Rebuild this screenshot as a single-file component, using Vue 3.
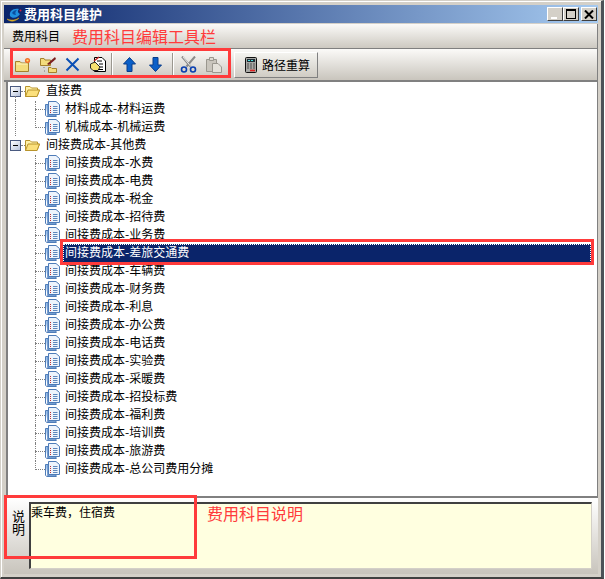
<script setup>
const names = ['水费','电费','税金','招待费','业务费','差旅交通费','车辆费','财务费','利息','办公费','电话费','实验费','采暖费','招投标费','福利费','培训费','旅游费','总公司费用分摊']
const rows = [
  { level: 0, text: '直接费' },
  { level: 1, text: '材料成本-材料运费', guide: true },
  { level: 1, text: '机械成本-机械运费', guide: true, last: true },
  { level: 0, text: '间接费成本-其他费', last: true },
  ...names.map((n, i) => ({
    level: 1,
    text: '间接费成本-' + n,
    selected: n === '差旅交通费',
    last: i === names.length - 1
  }))
]
</script>

<template>
  <div class="win">
    <div class="title">
      <svg class="logo" width="16" height="16" viewBox="0 0 16 16">
        <path d="M1 12 C4 15 9 15 13 11 C10 13 5 14 1 12Z" fill="#e8c030" stroke="#c89820" stroke-width="0.6"/>
        <path d="M4 9 C3 4 7 1 13 2 C11 4 12 6 14 7 C12 11 6 12 4 9Z" fill="#1f8fe0"/>
        <path d="M6 6 C7 4 9 3 11 3 C9 5 9 6 10 8 C8 8 7 7 6 6Z" fill="#0a4fa0"/>
        <circle cx="14.5" cy="3.5" r="1" fill="#d02040"/>
      </svg>
      <span class="title-text">费用科目维护</span>
      <div class="caps">
        <span class="cap cap-min"><i></i></span>
        <span class="cap cap-max"><i></i></span>
        <span class="cap cap-close">
          <svg width="10" height="9" viewBox="0 0 10 9"><path d="M1 0.5 L9 8.5 M9 0.5 L1 8.5" stroke="#000" stroke-width="2" fill="none"/></svg>
        </span>
      </div>
    </div>

    <div class="menu">
      <span class="menu-item">费用科目</span>
      <span class="note note-menu">费用科目编辑工具栏</span>
    </div>

    <div class="toolbar">
      <div class="tools">
        <svg class="tool" width="16" height="16" viewBox="0 0 16 16">
          <path d="M0.5 4.5 H5 L6.5 6 H13.5 V14.5 H0.5Z" fill="#f4dc7c" stroke="#a5822c"/>
          <path d="M1.5 7 H12.5" stroke="#fff6c4"/>
          <circle cx="12.5" cy="3.5" r="2.6" fill="#f0702c"/>
          <circle cx="12.5" cy="3.5" r="1.1" fill="#ffe070"/>
        </svg>
        <svg class="tool tool-b" width="17" height="17" viewBox="0 0 17 17">
          <path d="M0.5 2.5 H4 L5 4 H10.5 V9.5 H0.5Z" fill="#f4dc7c" stroke="#a5822c"/>
          <path d="M7 8 L15 1 L16 3 L9 9Z" fill="#7a1f1f"/>
          <path d="M8.5 11.5 H11 L12 12.5 H16.5 V16.5 H8.5Z" fill="#f4dc7c" stroke="#a5822c"/>
          <path d="M4 11 V13 M4 15 H6" stroke="#777" stroke-dasharray="1 1"/>
        </svg>
        <svg class="tool tool-c" width="15" height="15" viewBox="0 0 15 15">
          <path d="M1.5 1.5 L13.5 13.5 M13.5 1.5 L1.5 13.5" stroke="#0a4fb5" stroke-width="2" fill="none"/>
        </svg>
        <svg class="tool tool-d" width="16" height="17" viewBox="0 0 16 17">
          <path d="M4.5 1.5 H12 L15.5 5 V15.5 H4.5Z" fill="#fff" stroke="#000"/>
          <path d="M7 5 H12 M9 8 H13 M10 11 H13 M7 13.5 H13" stroke="#000"/>
          <path d="M0.5 8 L5 6 L10 11 L8 14.5 H3 L0.5 12Z" fill="#f6e070" stroke="#222"/>
          <path d="M4 5 L9 1" stroke="#c02020" stroke-width="1.5"/>
        </svg>
        <span class="sep sep-a"></span>
        <svg class="tool tool-up" width="13" height="15" viewBox="0 0 13 15">
          <path d="M6.5 0.5 L12.5 7 H9 V14.5 H4 V7 H0.5Z" fill="#0a5fc8" stroke="#083c8a"/>
        </svg>
        <svg class="tool tool-down" width="13" height="15" viewBox="0 0 13 15">
          <path d="M6.5 14.5 L12.5 8 H9 V0.5 H4 V8 H0.5Z" fill="#0a5fc8" stroke="#083c8a"/>
        </svg>
        <span class="sep sep-b"></span>
        <svg class="tool tool-cut" width="17" height="17" viewBox="0 0 17 17">
          <path d="M2 0.5 L10.5 10.5 M15 0.5 L6.5 10.5" stroke="#8a8a8a" stroke-width="2" fill="none"/>
          <path d="M3 1 L10.5 10" stroke="#e8e8e8" fill="none"/>
          <circle cx="4" cy="13.5" r="2.5" fill="none" stroke="#0a3fb0" stroke-width="1.6"/>
          <circle cx="13" cy="13.5" r="2.5" fill="none" stroke="#0a3fb0" stroke-width="1.6"/>
        </svg>
        <svg class="tool tool-paste" width="16" height="16" viewBox="0 0 16 16">
          <path d="M0.5 2.5 H10.5 V14.5 H0.5Z" fill="#c9c5bd" stroke="#9a978f"/>
          <path d="M3.5 0.5 H7.5 V3.5 H3.5Z" fill="#dedad2" stroke="#9a978f"/>
          <path d="M6.5 6.5 H12 L15.5 10 V15.5 H6.5Z" fill="#e4e1da" stroke="#9a978f"/>
        </svg>
      </div>
      <button class="calc-btn" type="button">
        <svg width="12" height="16" viewBox="0 0 12 16">
          <rect x="0.5" y="0.5" width="11" height="15" rx="1" fill="#a8a8a4" stroke="#101010"/>
          <rect x="2" y="2" width="8" height="3" fill="#1c2c34"/>
          <path d="M3 3.5 H5 M6 3.5 H8" stroke="#50e0e0"/>
          <path d="M2 7 H10 M2 9 H10 M2 11 H10" stroke="#505050" stroke-dasharray="2 1"/>
          <path d="M5 13.5 H10" stroke="#e02020" stroke-width="1.6"/>
        </svg>
        <span>路径重算</span>
      </button>
    </div>

    <div class="tree">
      <div v-for="(r, i) in rows" :key="i" class="row" :class="'lv' + r.level">
        <i v-if="r.guide" class="vline"></i>
        <template v-if="r.level === 0">
          <i v-if="i === 0" class="vline root-down"></i>
          <span class="expander"><i></i></span>
          <i class="hstub"></i>
          <svg class="folder" width="15" height="12" viewBox="0 0 15 12">
            <path d="M0.5 11.5 V1.5 H5 L6.5 3 H12.5 V5 H14.5 L12 11.5Z" fill="#fff0a8" stroke="#b8942c"/>
            <path d="M0.5 11.5 L3 5 H14.5 L12 11.5Z" fill="#fbe07c" stroke="#b8942c"/>
          </svg>
          <span class="label root-label">{{ r.text }}</span>
        </template>
        <template v-else>
          <i class="branch" :class="{ 'branch-last': r.last }"></i>
          <svg class="doc" width="15" height="16" viewBox="0 0 15 16">
            <path d="M0.5 3.5 H3 V15.5 H11 V14 H2.5" fill="#9cc0ea" stroke="#4f7cb8"/>
            <path d="M0.5 3.5 V14 C0.5 15 1.5 15.5 3 15.5 H11.5" fill="none" stroke="#4f7cb8"/>
            <path d="M3.5 0.5 H11 L14.5 3.5 V13.5 H3.5Z" fill="#eef4fc" stroke="#4f7cb8"/>
            <path d="M8 5.5 H12.5 M8 7.5 H12.5 M8 9.5 H12.5 M8 11.5 H12.5" stroke="#5f88bc"/>
            <path d="M5.5 5 V6 M5.5 7 V8 M5.5 9 V10 M5.5 11 V12" stroke="#c03030"/>
          </svg>
          <span class="label" :class="{ selected: r.selected }">{{ r.text }}</span>
        </template>
      </div>
    </div>

    <div class="bottom">
      <div class="tab"><span class="tab-text">说明</span></div>
      <div class="memo">乘车费，住宿费</div>
    </div>

    <span class="box box-tools"></span>
    <span class="box box-row"></span>
    <span class="box box-memo"></span>
    <span class="note note-memo">费用科目说明</span>
  </div>
</template>

<style>
html, body { margin: 0; background: #fff; }
</style>

<style scoped>
.win {
  position: relative;
  box-sizing: border-box;
  width: 604px;
  height: 579px;
  display: flex;
  flex-direction: column;
  padding: 4px 3px 3px 4px;
  background: #d4d0c8;
  border-top: 1px solid #d4d0c8;
  border-left: 1px solid #d4d0c8;
  border-right: 3px solid #4c5258;
  border-bottom: 2px solid #404040;
  box-shadow: inset 1px 1px 0 #fff;
  font-family: "Noto Sans CJK SC", "Liberation Sans", sans-serif;
  font-size: 12px;
  color: #000;
  overflow: hidden;
}
.title {
  flex: 0 0 18px;
  margin-left: -1px;
  display: flex;
  align-items: center;
  background: linear-gradient(90deg, #0a246a, #a6caf0);
  color: #fff;
}
.logo { margin: 2px 2px 0 2px; }
.title-text { font-weight: 700; font-size: 13px; line-height: 18px; }
.caps { margin-left: auto; margin-right: 1px; display: flex; }
.cap {
  box-sizing: border-box;
  width: 16px;
  height: 14px;
  background: #d4d0c8;
  border: 1px solid;
  border-color: #fff #404040 #404040 #fff;
  display: flex;
  align-items: center;
  justify-content: center;
  position: relative;
}
.cap-close { margin-left: 2px; }
.cap-min i { position: absolute; left: 3px; bottom: 1px; width: 6px; height: 2px; background: #fff; }
.cap-max i { box-sizing: border-box; width: 10px; height: 10px; border: 1px solid #000; border-top-width: 2px; }
.menu {
  flex: 0 0 24px;
  margin-top: 1px;
  margin-left: -1px;
  display: flex;
  align-items: center;
  box-sizing: border-box;
  padding-left: 8px;
  background: linear-gradient(#fbfaf8, #cdc9c1);
  border-bottom: 1px solid #808080;
  border-right: 1px solid #808080;
}
.menu-item { line-height: 24px; }
.note { color: #ff3b3b; font-size: 16px; line-height: 20px; }
.note-menu { margin-left: 12px; }
.toolbar {
  flex: 0 0 33px;
  margin-left: -1px;
  box-sizing: border-box;
  display: flex;
  align-items: center;
  background: linear-gradient(#fbfaf8, #c9c5bd);
  border-bottom: 2px solid #808080;
  border-right: 1px solid #808080;
}
.tools { display: flex; align-items: center; width: 230px; flex: 0 0 230px; height: 30px; }
.tool { margin-left: 10px; display: block; }
.tool:first-child { margin-left: 11px; }
.tool-b { margin-left: 9px; }
.tool-c { margin-left: 8px; }
.tool-d { margin-left: 10px; }
.sep { height: 24px; background: #9a978f; border-right: 1px solid #fff; box-sizing: content-box; width: 1px; }
.sep-a { margin-left: 5px; }
.tool-up { margin-left: 10px; }
.tool-down { margin-left: 13px; }
.sep-b { margin-left: 10px; }
.tool-cut { margin-left: 6px; }
.tool-paste { margin-left: 9px; }
.calc-btn {
  box-sizing: border-box;
  width: 84px;
  height: 26px;
  margin-left: 0;
  padding: 0 0 0 10px;
  display: flex;
  align-items: center;
  gap: 5px;
  font: inherit;
  background: linear-gradient(#f4f3ef, #d0ccc4);
  border: 1px solid;
  border-color: #fff #808080 #808080 #fff;
}
.tree {
  flex: 1 1 auto;
  margin-left: 1px;
  background: #fff;
  border-left: 2px solid #808080;
  border-right: 1px solid #808080;
  box-sizing: border-box;
  padding-top: 0;
  overflow: hidden;
}
.row {
  position: relative;
  height: 18px;
  display: flex;
  align-items: center;
  line-height: 18px;
  white-space: nowrap;
}
.expander {
  box-sizing: border-box;
  width: 11px;
  height: 11px;
  margin-left: 2px;
  border: 1px solid #4a5a80;
  background: linear-gradient(135deg, #fff, #b8c4dc);
  display: flex;
  align-items: center;
  justify-content: center;
}
.expander i { width: 5px; height: 1px; background: #000; }
.hstub { width: 4px; height: 0; border-top: 1px dotted #808080; }
.folder { margin-right: 6px; }
.vline { position: absolute; left: 7px; top: 0; bottom: 0; border-left: 1px dotted #808080; }
.root-down { top: 14px; }
.branch {
  position: relative;
  width: 10px;
  height: 0;
  margin-left: 27px;
  border-top: 1px dotted #808080;
}
.branch::before {
  content: "";
  position: absolute;
  left: 0;
  top: -9px;
  height: 18px;
  border-left: 1px dotted #808080;
}
.branch-last::before { height: 9px; }
.doc { margin-right: 4px; }
.label { line-height: 16px; padding: 0 1px; margin-bottom: 2px; }
.root-label { padding-left: 0; }
.selected {
  box-sizing: border-box;
  flex: 1 1 auto;
  height: 19px;
  margin-left: -1px;
  margin-right: 6px;
  margin-bottom: 0;
  padding-left: 2px;
  line-height: 16px;
  color: #fff;
  background: #0a246a;
  outline: 1px dotted #fff;
  outline-offset: -1px;
}
.bottom {
  flex: 0 0 78px;
  margin-left: -1px;
  display: flex;
  box-sizing: border-box;
  padding: 4px 6px 5px 0;
  border-top: 2px solid #808080;
  background: linear-gradient(#ffffff, #c8c4bc);
}
.tab {
  flex: 0 0 25px;
  height: 67px;
  display: flex;
  justify-content: center;
  padding: 8px 0 0 3px;
  box-sizing: border-box;
}
.tab-text { writing-mode: vertical-rl; font-size: 13px; line-height: 16px; height: 26px; }
.memo {
  flex: 1 1 auto;
  box-sizing: border-box;
  background: #ffffe0;
  padding: 1px 0;
  line-height: 14px;
  border: 1px solid;
  border-width: 2px 1px 1px 2px;
  border-color: #404040 #d4d0c8 #d4d0c8 #404040;
}
.box { position: absolute; box-sizing: border-box; border: 3px solid #ff3b3b; pointer-events: none; }
.box-tools { left: 9px; top: 47px; width: 221px; height: 30px; }
.box-row { left: 59px; top: 238px; width: 534px; height: 26px; }
.box-memo { left: 3px; top: 494px; width: 193px; height: 64px; }
.note-memo { position: absolute; left: 206px; top: 502px; }
</style>
